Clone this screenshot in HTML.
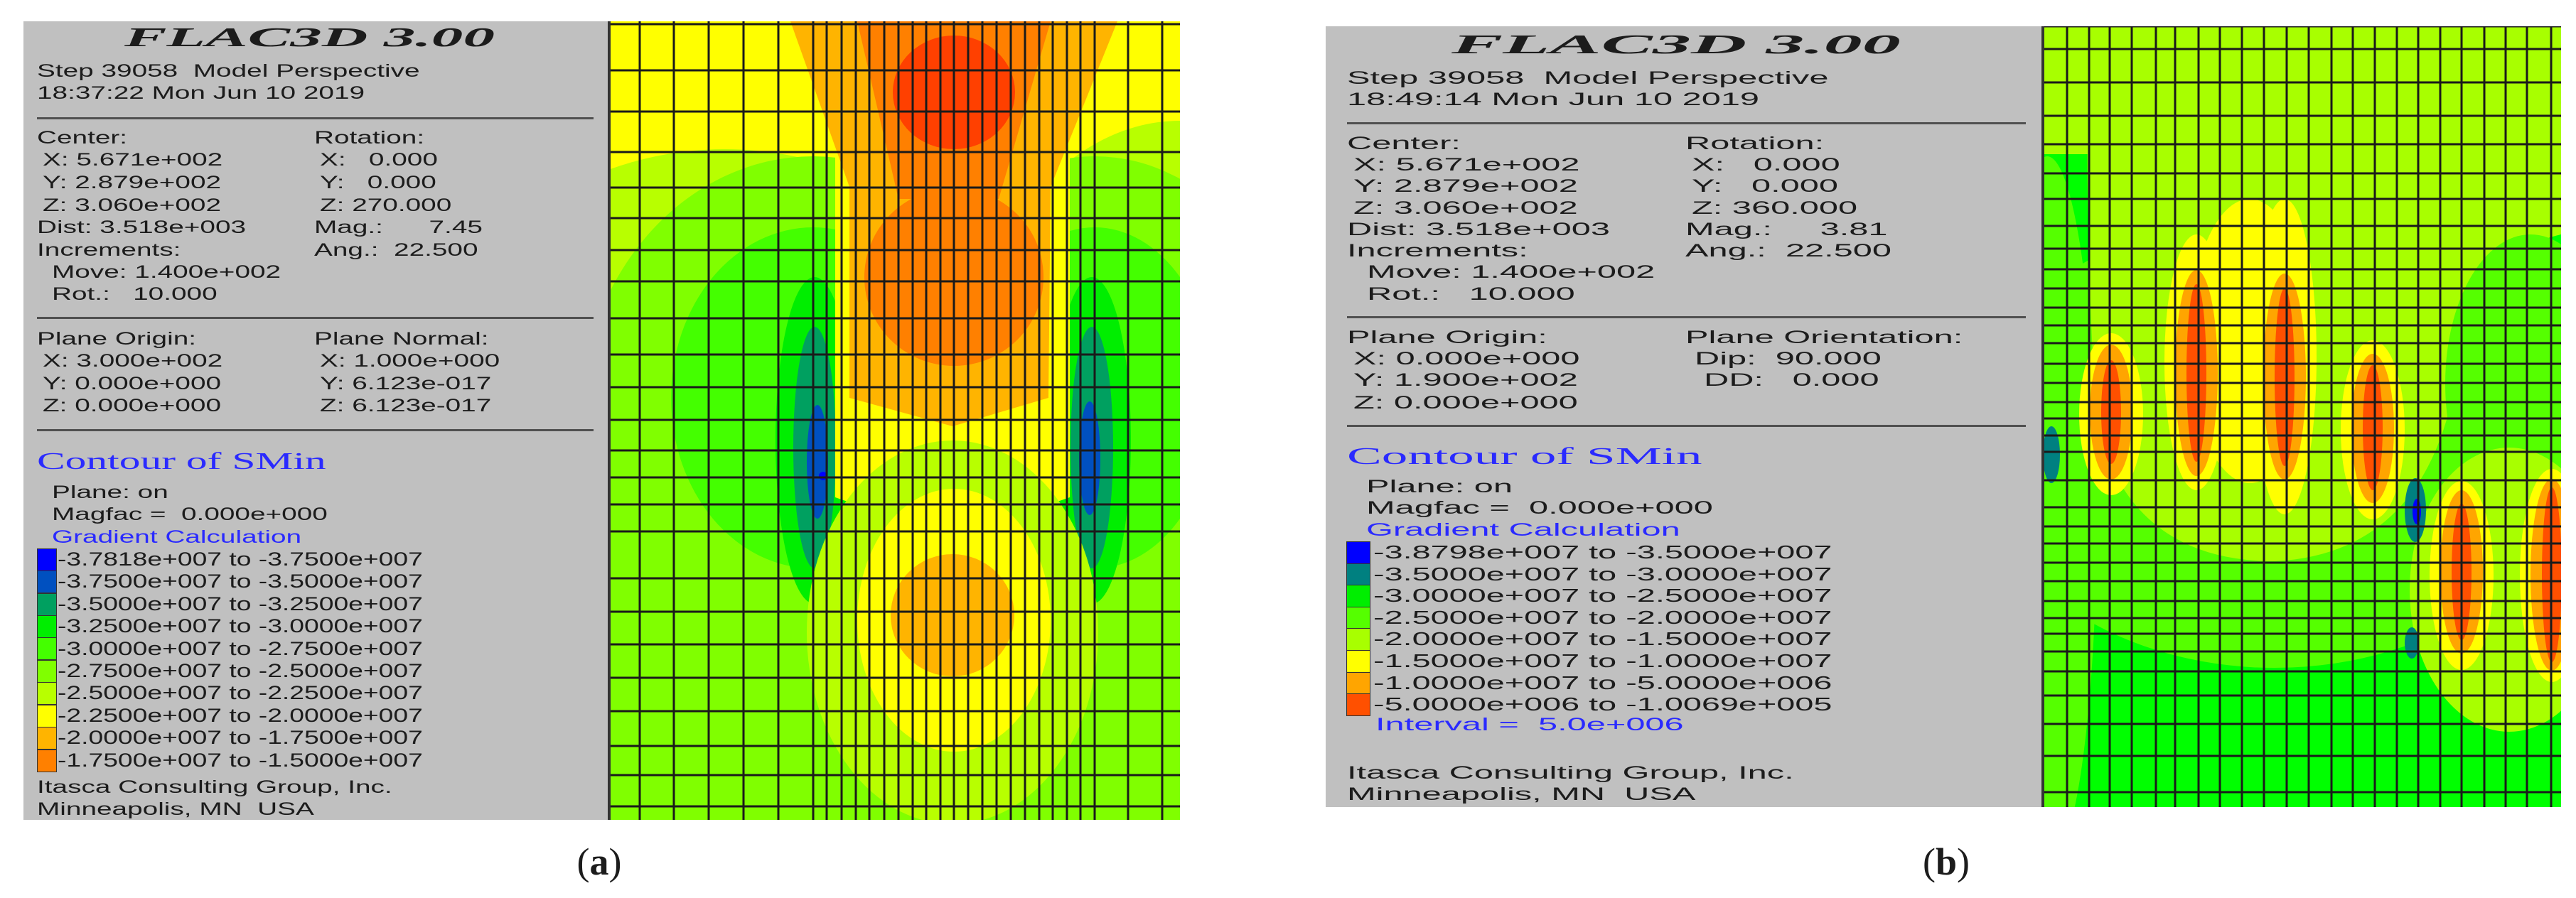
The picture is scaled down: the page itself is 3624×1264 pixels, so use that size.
<!DOCTYPE html>
<html><head><meta charset="utf-8"><style>
html,body{margin:0;padding:0;background:#fff;}
body{width:3624px;height:1264px;position:relative;overflow:hidden;font-family:"Liberation Sans",Arial,sans-serif;color:#1c1c1c;}
.t{position:absolute;white-space:pre;line-height:32px;height:32px;transform-origin:0 50%;}
.ha{font-size:25px;transform:scaleX(1.55);}
.hb{font-size:25px;transform:scaleX(1.95);}
.la{font-size:27px;transform:scaleX(1.38);}
.lb{font-size:26px;transform:scaleX(1.8);}
.blue{color:#2a2aff;}
.ttl{font-family:"Liberation Serif",serif;font-weight:bold;font-style:italic;font-size:38px;line-height:44px;height:44px;}
.cnt{font-family:"Liberation Serif",serif;font-size:34px;line-height:40px;height:40px;color:#2a2aff;}
.rule{position:absolute;height:3px;background:#505050;}
.sw{position:absolute;border:1px solid #333;box-sizing:border-box;}
.cap{position:absolute;font-family:"Liberation Serif",serif;font-size:54px;line-height:60px;transform:translateX(-50%);}
</style></head><body>
<svg width="3624" height="1264" style="position:absolute;left:0;top:0">
<defs>
<clipPath id="ca"><rect x="858" y="30" width="802" height="1124"/></clipPath>
<clipPath id="cb"><rect x="2876" y="37" width="727" height="1099"/></clipPath>
</defs>
<rect x="33" y="30" width="825" height="1124" fill="#c0c0c0"/>
<rect x="1865" y="37" width="1011" height="1099" fill="#c0c0c0"/>
<g clip-path="url(#ca)">
<rect x="858" y="30" width="802" height="1124" fill="#80ff00"/>
<rect x="858" y="30" width="802" height="470" fill="#ffff00"/>
<ellipse cx="1020" cy="650" rx="460" ry="440" fill="#b8ff00"/>
<ellipse cx="1660" cy="620" rx="320" ry="450" fill="#b8ff00"/>
<rect x="858" y="620" width="802" height="534" fill="#80ff00"/>
<ellipse cx="1144" cy="600" rx="330" ry="380" fill="#80ff00"/>
<ellipse cx="1540" cy="600" rx="300" ry="380" fill="#80ff00"/>
<ellipse cx="1144" cy="560" rx="200" ry="240" fill="#44ff00"/>
<ellipse cx="1540" cy="560" rx="170" ry="240" fill="#44ff00"/>
<ellipse cx="1146" cy="620" rx="55" ry="230" fill="#00ee00"/>
<ellipse cx="1536" cy="620" rx="55" ry="230" fill="#00ee00"/>
<ellipse cx="1146" cy="630" rx="30" ry="170" fill="#00a060"/>
<ellipse cx="1536" cy="630" rx="30" ry="170" fill="#00a060"/>
<ellipse cx="1150" cy="650" rx="15" ry="80" fill="#0050c0"/>
<ellipse cx="1533" cy="645" rx="15" ry="80" fill="#0050c0"/>
<circle cx="1158" cy="670" r="6" fill="#0000ff"/>
<path d="M1175 214 L1505 214 L1505 700 Q1340 760 1175 700 Z" fill="#ffff00"/>
<polygon points="1112,30 1572,30 1478,263 1475,560 1340,600 1195,560 1195,263" fill="#ffb400"/>
<polygon points="1206,30 1478,30 1405,280 1264,280" fill="#ff8000"/>
<ellipse cx="1342" cy="390" rx="126" ry="125" fill="#ff8000"/>
<ellipse cx="1342" cy="130" rx="86" ry="80" fill="#ff4000"/>
<ellipse cx="1340" cy="890" rx="205" ry="270" fill="#b8ff00"/>
<ellipse cx="1342" cy="873" rx="136" ry="185" fill="#ffff00"/>
<ellipse cx="1340" cy="866" rx="87" ry="86" fill="#ffb400"/>
<path stroke="#1a1a1a" stroke-width="3" fill="none" d="M900 30V1154M948 30V1154M997 30V1154M1046 30V1154M1095 30V1154M1144 30V1154M1163 30V1154M1184 30V1154M1204 30V1154M1223 30V1154M1244 30V1154M1264 30V1154M1284 30V1154M1303 30V1154M1323 30V1154M1342 30V1154M1362 30V1154M1382 30V1154M1402 30V1154M1422 30V1154M1442 30V1154M1462 30V1154M1481 30V1154M1501 30V1154M1520 30V1154M1540 30V1154M1587 30V1154M1635 30V1154
M858 34H1660M858 99H1660M858 157H1660M858 214H1660M858 264H1660M858 307H1660M858 352H1660M858 396H1660M858 448H1660M858 499H1660M858 545H1660M858 591H1660M858 634H1660M858 672H1660M858 710H1660M858 748H1660M858 814H1660M858 861H1660M858 907H1660M858 954H1660M858 1001H1660M858 1050H1660M858 1091H1660M858 1135H1660"/>
</g>
<rect x="855" y="30" width="4" height="1124" fill="#333"/>
<g clip-path="url(#cb)">
<rect x="2876" y="37" width="727" height="1099" fill="#00ff00"/>
<ellipse cx="3200" cy="620" rx="430" ry="320" fill="#55ff00"/>
<ellipse cx="2880" cy="720" rx="70" ry="500" fill="#55ff00"/>
<path d="M2940 37 H3603 V330 Q3470 360 3450 560 Q3400 780 3200 790 Q3000 790 2950 600 Q2930 300 2940 37 Z" fill="#a8ff00"/>
<rect x="2876" y="37" width="70" height="180" fill="#a8ff00"/>
<ellipse cx="3560" cy="540" rx="120" ry="210" fill="#55ff00"/>
<ellipse cx="3530" cy="830" rx="140" ry="200" fill="#a8ff00"/>
<ellipse cx="3165" cy="480" rx="85" ry="200" fill="#ffff00"/>
<g fill="#ffff00">
<ellipse cx="2970" cy="583" rx="45" ry="114"/><ellipse cx="3090" cy="510" rx="45" ry="180"/><ellipse cx="3214" cy="502" rx="45" ry="222"/><ellipse cx="3338" cy="605" rx="45" ry="126"/><ellipse cx="3463" cy="810" rx="45" ry="133"/><ellipse cx="3590" cy="810" rx="45" ry="150"/></g>
<g fill="#ffa500">
<ellipse cx="2970" cy="580" rx="30" ry="95"/><ellipse cx="3090" cy="525" rx="30" ry="145"/><ellipse cx="3214" cy="530" rx="30" ry="145"/><ellipse cx="3338" cy="603" rx="30" ry="105"/><ellipse cx="3463" cy="805" rx="30" ry="115"/><ellipse cx="3590" cy="809" rx="30" ry="135"/></g>
<g fill="#ff5000">
<ellipse cx="2970" cy="580" rx="14" ry="73"/><ellipse cx="3090" cy="525" rx="14" ry="125"/><ellipse cx="3214" cy="531" rx="14" ry="125"/><ellipse cx="3338" cy="602" rx="14" ry="88"/><ellipse cx="3463" cy="805" rx="14" ry="96"/><ellipse cx="3590" cy="809" rx="14" ry="123"/></g>
<ellipse cx="3398" cy="718" rx="15" ry="45" fill="#008080"/>
<ellipse cx="3400" cy="720" rx="6" ry="18" fill="#0000ff"/>
<ellipse cx="3393" cy="905" rx="10" ry="22" fill="#008080"/>
<ellipse cx="2886" cy="640" rx="12" ry="40" fill="#008080"/>
<path stroke="#1a1a1a" stroke-width="3" fill="none" d="M2908 37V1136M2939 37V1136M2968 37V1136M2999 37V1136M3033 37V1136M3060 37V1136M3093 37V1136M3123 37V1136M3154 37V1136M3185 37V1136M3217 37V1136M3248 37V1136M3280 37V1136M3310 37V1136M3341 37V1136M3372 37V1136M3402 37V1136M3433 37V1136M3463 37V1136M3495 37V1136M3525 37V1136M3555 37V1136M3589 37V1136
M2876 37H3603M2876 69H3603M2876 116H3603M2876 163H3603M2876 203H3603M2876 244H3603M2876 280H3603M2876 318H3603M2876 350H3603M2876 379H3603M2876 406H3603M2876 433H3603M2876 458H3603M2876 483H3603M2876 512H3603M2876 539H3603M2876 566H3603M2876 589H3603M2876 613H3603M2876 636H3603M2876 676H3603M2876 714H3603M2876 741H3603M2876 765H3603M2876 792H3603M2876 818H3603M2876 846H3603M2876 870H3603M2876 892H3603M2876 917H3603M2876 945H3603M2876 979H3603M2876 1019H3603M2876 1064H3603M2876 1115H3603"/>
</g>
<rect x="2872" y="37" width="4" height="1099" fill="#333"/>
</svg>

<!-- Panel A -->
<div class="t ttl" style="left:175px;top:31px;transform:scaleX(2.35)">FLAC3D 3.00</div>
<div class="t ha" style="left:52px;top:84px">Step 39058  Model Perspective</div>
<div class="t ha" style="left:52px;top:115px">18:37:22 Mon Jun 10 2019</div>
<div class="rule" style="left:52px;top:165px;width:783px"></div>
<div class="t ha" style="left:52px;top:178px">Center:</div>
<div class="t ha" style="left:442px;top:178px">Rotation:</div>
<div class="t ha" style="left:60px;top:209px">X: 5.671e+002</div>
<div class="t ha" style="left:450px;top:209px">X:   0.000</div>
<div class="t ha" style="left:60px;top:241px">Y: 2.879e+002</div>
<div class="t ha" style="left:450px;top:241px">Y:   0.000</div>
<div class="t ha" style="left:60px;top:273px">Z: 3.060e+002</div>
<div class="t ha" style="left:450px;top:273px">Z: 270.000</div>
<div class="t ha" style="left:52px;top:304px">Dist: 3.518e+003</div>
<div class="t ha" style="left:442px;top:304px">Mag.:      7.45</div>
<div class="t ha" style="left:52px;top:336px">Increments:</div>
<div class="t ha" style="left:442px;top:336px">Ang.:  22.500</div>
<div class="t ha" style="left:73px;top:367px">Move: 1.400e+002</div>
<div class="t ha" style="left:73px;top:398px">Rot.:   10.000</div>
<div class="rule" style="left:52px;top:446px;width:783px"></div>
<div class="t ha" style="left:52px;top:461px">Plane Origin:</div>
<div class="t ha" style="left:442px;top:461px">Plane Normal:</div>
<div class="t ha" style="left:60px;top:492px">X: 3.000e+002</div>
<div class="t ha" style="left:450px;top:492px">X: 1.000e+000</div>
<div class="t ha" style="left:60px;top:524px">Y: 0.000e+000</div>
<div class="t ha" style="left:450px;top:524px">Y: 6.123e-017</div>
<div class="t ha" style="left:60px;top:555px">Z: 0.000e+000</div>
<div class="t ha" style="left:450px;top:555px">Z: 6.123e-017</div>
<div class="rule" style="left:52px;top:604px;width:783px"></div>
<div class="t cnt" style="left:52px;top:630px;transform:scaleX(1.75)">Contour of SMin</div>
<div class="t ha" style="left:73px;top:677px">Plane: on</div>
<div class="t ha" style="left:73px;top:708px">Magfac =  0.000e+000</div>
<div class="t ha blue" style="left:73px;top:740px">Gradient Calculation</div>
<div class="sw" style="left:52px;top:772px;width:28px;height:32px;background:#0000ff"></div>
<div class="sw" style="left:52px;top:803px;width:28px;height:32px;background:#0050c0"></div>
<div class="sw" style="left:52px;top:835px;width:28px;height:32px;background:#00a060"></div>
<div class="sw" style="left:52px;top:866px;width:28px;height:32px;background:#00ee00"></div>
<div class="sw" style="left:52px;top:897px;width:28px;height:32px;background:#44ff00"></div>
<div class="sw" style="left:52px;top:929px;width:28px;height:32px;background:#80ff00"></div>
<div class="sw" style="left:52px;top:960px;width:28px;height:32px;background:#b8ff00"></div>
<div class="sw" style="left:52px;top:992px;width:28px;height:32px;background:#ffff00"></div>
<div class="sw" style="left:52px;top:1023px;width:28px;height:32px;background:#ffb400"></div>
<div class="sw" style="left:52px;top:1055px;width:28px;height:32px;background:#ff8000"></div>
<div class="t la" style="left:81px;top:771px">-3.7818e+007 to -3.7500e+007</div>
<div class="t la" style="left:81px;top:802px">-3.7500e+007 to -3.5000e+007</div>
<div class="t la" style="left:81px;top:834px">-3.5000e+007 to -3.2500e+007</div>
<div class="t la" style="left:81px;top:865px">-3.2500e+007 to -3.0000e+007</div>
<div class="t la" style="left:81px;top:897px">-3.0000e+007 to -2.7500e+007</div>
<div class="t la" style="left:81px;top:928px">-2.7500e+007 to -2.5000e+007</div>
<div class="t la" style="left:81px;top:959px">-2.5000e+007 to -2.2500e+007</div>
<div class="t la" style="left:81px;top:991px">-2.2500e+007 to -2.0000e+007</div>
<div class="t la" style="left:81px;top:1022px">-2.0000e+007 to -1.7500e+007</div>
<div class="t la" style="left:81px;top:1054px">-1.7500e+007 to -1.5000e+007</div>
<div class="t ha" style="left:52px;top:1092px">Itasca Consulting Group, Inc.</div>
<div class="t ha" style="left:52px;top:1123px">Minneapolis, MN  USA</div>
<div class="cap" style="left:843px;top:1183px">(<b>a</b>)</div>

<!-- Panel B -->
<div class="t ttl" style="left:2042px;top:41px;transform:scaleX(2.85)">FLAC3D 3.00</div>
<div class="t hb" style="left:1895px;top:94px">Step 39058  Model Perspective</div>
<div class="t hb" style="left:1895px;top:124px">18:49:14 Mon Jun 10 2019</div>
<div class="rule" style="left:1895px;top:172px;width:955px"></div>
<div class="t hb" style="left:1895px;top:186px">Center:</div>
<div class="t hb" style="left:2371px;top:186px">Rotation:</div>
<div class="t hb" style="left:1904px;top:216px">X: 5.671e+002</div>
<div class="t hb" style="left:2380px;top:216px">X:   0.000</div>
<div class="t hb" style="left:1904px;top:246px">Y: 2.879e+002</div>
<div class="t hb" style="left:2380px;top:246px">Y:   0.000</div>
<div class="t hb" style="left:1904px;top:277px">Z: 3.060e+002</div>
<div class="t hb" style="left:2380px;top:277px">Z: 360.000</div>
<div class="t hb" style="left:1895px;top:307px">Dist: 3.518e+003</div>
<div class="t hb" style="left:2371px;top:307px">Mag.:     3.81</div>
<div class="t hb" style="left:1895px;top:337px">Increments:</div>
<div class="t hb" style="left:2371px;top:337px">Ang.:  22.500</div>
<div class="t hb" style="left:1923px;top:367px">Move: 1.400e+002</div>
<div class="t hb" style="left:1923px;top:398px">Rot.:   10.000</div>
<div class="rule" style="left:1895px;top:445px;width:955px"></div>
<div class="t hb" style="left:1895px;top:459px">Plane Origin:</div>
<div class="t hb" style="left:2371px;top:459px">Plane Orientation:</div>
<div class="t hb" style="left:1904px;top:489px">X: 0.000e+000</div>
<div class="t hb" style="left:2384px;top:489px">Dip:  90.000</div>
<div class="t hb" style="left:1904px;top:519px">Y: 1.900e+002</div>
<div class="t hb" style="left:2397px;top:519px">DD:   0.000</div>
<div class="t hb" style="left:1904px;top:551px">Z: 0.000e+000</div>
<div class="rule" style="left:1895px;top:598px;width:955px"></div>
<div class="t cnt" style="left:1895px;top:623px;transform:scaleX(2.15)">Contour of SMin</div>
<div class="t hb" style="left:1922px;top:669px">Plane: on</div>
<div class="t hb" style="left:1922px;top:699px">Magfac =  0.000e+000</div>
<div class="t hb blue" style="left:1922px;top:730px">Gradient Calculation</div>
<div class="sw" style="left:1894px;top:762px;width:34px;height:32px;background:#0000ff"></div>
<div class="sw" style="left:1894px;top:793px;width:34px;height:32px;background:#008080"></div>
<div class="sw" style="left:1894px;top:823px;width:34px;height:32px;background:#00ee00"></div>
<div class="sw" style="left:1894px;top:854px;width:34px;height:32px;background:#55ff00"></div>
<div class="sw" style="left:1894px;top:884px;width:34px;height:32px;background:#a8ff00"></div>
<div class="sw" style="left:1894px;top:915px;width:34px;height:32px;background:#ffff00"></div>
<div class="sw" style="left:1894px;top:946px;width:34px;height:32px;background:#ffa500"></div>
<div class="sw" style="left:1894px;top:976px;width:34px;height:32px;background:#ff5000"></div>
<div class="t lb" style="left:1932px;top:761px">-3.8798e+007 to -3.5000e+007</div>
<div class="t lb" style="left:1932px;top:792px">-3.5000e+007 to -3.0000e+007</div>
<div class="t lb" style="left:1932px;top:822px">-3.0000e+007 to -2.5000e+007</div>
<div class="t lb" style="left:1932px;top:853px">-2.5000e+007 to -2.0000e+007</div>
<div class="t lb" style="left:1932px;top:883px">-2.0000e+007 to -1.5000e+007</div>
<div class="t lb" style="left:1932px;top:914px">-1.5000e+007 to -1.0000e+007</div>
<div class="t lb" style="left:1932px;top:945px">-1.0000e+007 to -5.0000e+006</div>
<div class="t lb" style="left:1932px;top:975px">-5.0000e+006 to -1.0069e+005</div>
<div class="t hb blue" style="left:1935px;top:1004px">Interval =  5.0e+006</div>
<div class="t hb" style="left:1895px;top:1072px">Itasca Consulting Group, Inc.</div>
<div class="t hb" style="left:1895px;top:1102px">Minneapolis, MN  USA</div>
<div class="cap" style="left:2738px;top:1183px">(<b>b</b>)</div>
</body></html>
